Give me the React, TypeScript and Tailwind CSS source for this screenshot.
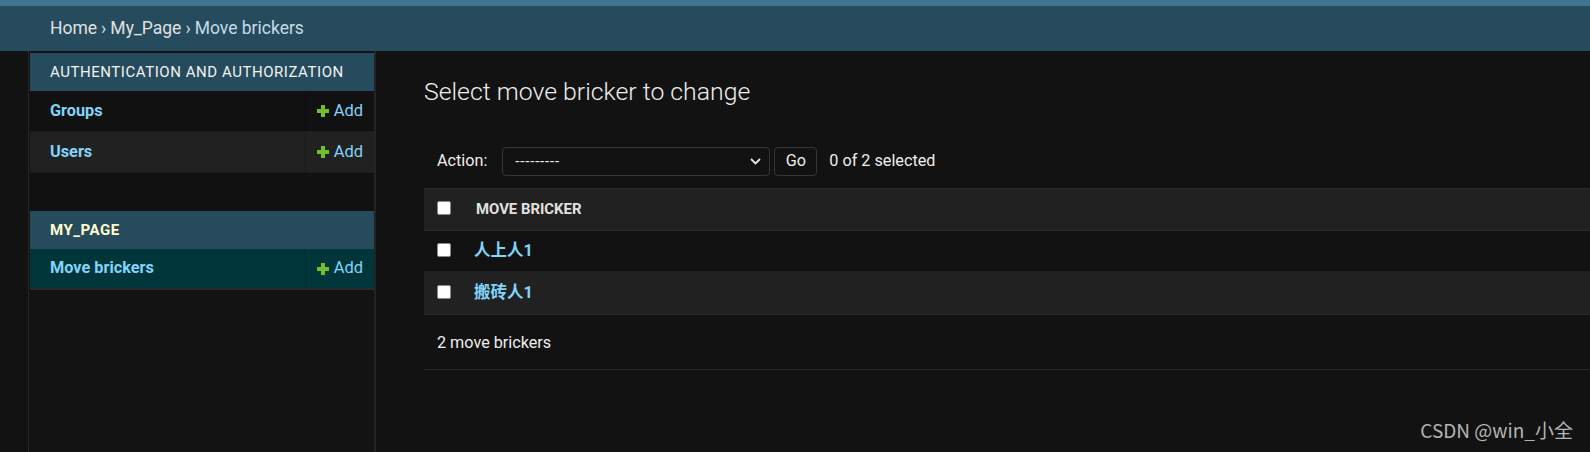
import React from "react";

const FONT = "font-[family-name:Roboto,'Noto_Sans_CJK_SC',sans-serif]";

function Plus() {
  return (
    <svg width="12" height="12" viewBox="0 0 12 12" className="shrink-0">
      <rect x="4" y="0" width="4" height="12" fill="#70bf2b" />
      <rect x="0" y="4" width="12" height="4" fill="#70bf2b" />
    </svg>
  );
}

function Box() {
  return <span className="block w-[14px] h-[14px] bg-white border border-[#8a8a8a] rounded-[2px] shrink-0 mb-[3px]" />;
}

function SideRow({ label, bg, current }: { label: string; bg: string; current?: boolean }) {
  return (
    <div className={`flex h-[41px] ${current ? "border-b-2 border-[#2a2a2a]" : "border-b border-[#1c1c1c]"} ${bg}`}>
      <div className="flex-1 flex items-center pl-[20px] text-[16.3px] font-bold text-[#81d4fa]">{label}</div>
      <div className="w-[69px] flex items-center justify-end gap-[5px] pr-[11px] border-l border-black/20 text-[16.5px] text-[#81d4fa]">
        <Plus />
        <span>Add</span>
      </div>
    </div>
  );
}

export default function App() {
  return (
    <div className={`${FONT} relative min-h-screen h-[452px] overflow-hidden bg-[#121212] text-[#eeeeee]`}>
      <div className="h-[6px] bg-[#3f7592]" />
      <div className="h-[45px] bg-[#264b5d] flex items-center pl-[50px] text-[17.5px] text-[#c4dce8]">
        <span className="text-[#e0e0e0]">Home</span>
        <span className="mx-[4px]">›</span>
        <span className="text-[#e0e0e0]">My_Page</span>
        <span className="mx-[4px]">›</span>
        <span>Move brickers</span>
      </div>
      <div className="flex h-[401px]">
        <div className="w-[29px] shrink-0 border-r border-[#262626] bg-[#121212]" />
        <div className="w-[347px] shrink-0 pl-px border-r-2 border-[#232323] pt-[2px] bg-[#131313]">
          <div className="h-[38px] bg-[#264b5d] flex items-center pl-[20px] text-[15px] tracking-[0.55px] text-[#f2f2f2]">
            AUTHENTICATION AND AUTHORIZATION
          </div>
          <SideRow label="Groups" bg="bg-[#111111]" />
          <SideRow label="Users" bg="bg-[#212121]" />
          <div className="h-[38px] bg-[#111111]" />
          <div className="h-[38px] bg-[#264b5d] flex items-center pl-[20px] text-[15px] tracking-[0.55px] font-bold text-[#ffffcc]">
            MY_PAGE
          </div>
          <SideRow label="Move brickers" bg="bg-[#00363a]" current />
        </div>
        <div className="flex-1 min-w-0 pl-[48px] pt-[26px]">
          <h1 className="text-[24.8px] leading-[30px] font-light text-[#eeeeee]">Select move bricker to change</h1>
          <div className="mt-[40px] flex items-center h-[29px] pl-[13px] text-[16.2px] text-[#eeeeee]">
            <span>Action:</span>
            <div className="ml-[15px] w-[268px] h-[29px] border border-[#353535] rounded-[4px] flex items-center justify-between pl-[12px] pr-[8px]">
              <span className="text-[15px] tracking-[0.8px]">---------</span>
              <svg width="11" height="7" viewBox="0 0 11 7">
                <path d="M1 1l4.5 4.5L10 1" fill="none" stroke="#e6e6e6" strokeWidth="1.8" />
              </svg>
            </div>
            <div className="ml-[4px] w-[43px] h-[29px] border border-[#353535] rounded-[4px] flex items-center justify-center">
              Go
            </div>
            <span className="ml-[12px]">0 of 2 selected</span>
          </div>
          <div className="mt-[12px]">
            <div className="h-[43px] bg-[#212121] border-y border-[#292929] flex items-center">
              <div className="w-[52px] pl-[13px] flex items-center"><Box /></div>
              <span className="text-[14.9px] font-bold text-[#e0e0e0]">MOVE BRICKER</span>
            </div>
            <div className="h-[41px] border-b border-[#1f1f1f] flex items-center">
              <div className="w-[50px] pl-[13px] flex items-center"><Box /></div>
              <span className="text-[16.5px] font-bold text-[#81d4fa]">人上人1</span>
            </div>
            <div className="h-[43px] bg-[#212121] border-b border-[#292929] flex items-center">
              <div className="w-[50px] pl-[13px] flex items-center"><Box /></div>
              <span className="text-[16.5px] font-bold text-[#81d4fa]">搬砖人1</span>
            </div>
            <div className="h-[55px] pt-[2px] border-b border-[#272727] flex items-center pl-[13px] text-[16.2px] text-[#eeeeee]">
              2 move brickers
            </div>
          </div>
        </div>
      </div>
      <div className="absolute right-[17px] bottom-[8px] text-[19px] text-[#b4b4b4] font-[family-name:'Noto_Sans_CJK_SC',sans-serif]">
        CSDN @win_小全
      </div>
    </div>
  );
}
